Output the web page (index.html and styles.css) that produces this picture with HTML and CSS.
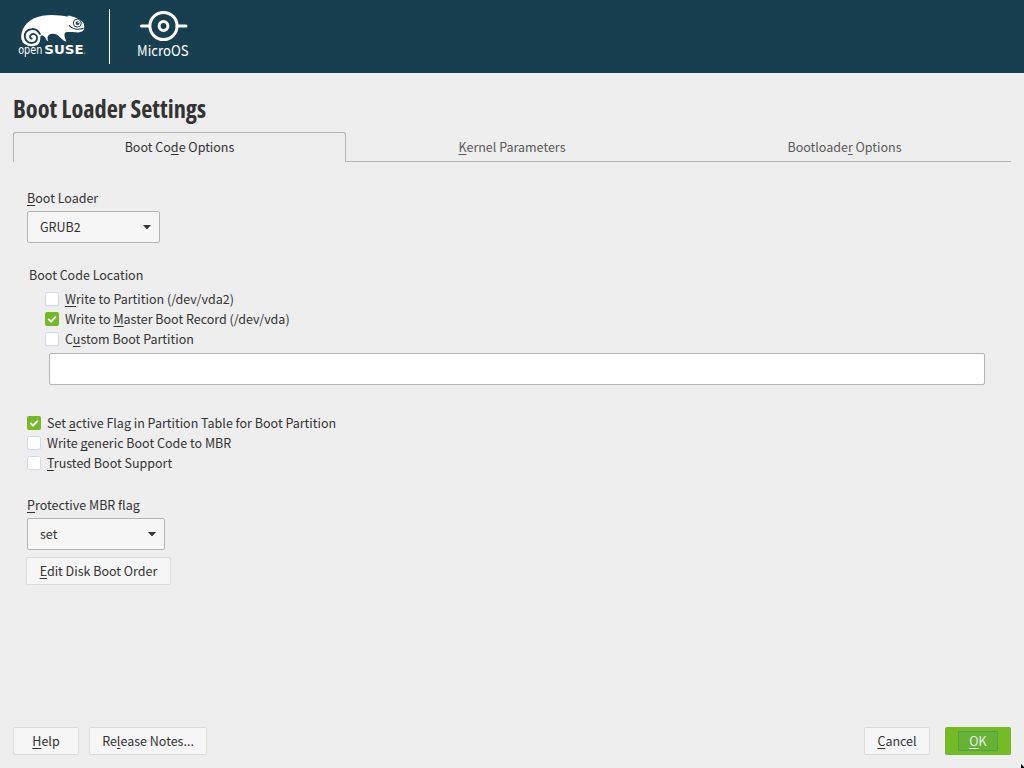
FILE: index.html
```html
<!DOCTYPE html>
<html lang="en">
<head>
<meta charset="utf-8">
<title>Boot Loader Settings</title>
<link rel="stylesheet" href="styles.css">
</head>
<body>
<header class="banner">
  <svg class="brand" width="110" height="73" viewBox="0 0 330 219">
    <path fill="#fff" d="M64 110C65 80 89 54 128 47C158 42 184 46 205 50C202 47 207 45 216 48C229 52 243 58 252 66C255 73 256 82 254 89C250 96 240 98 229 97C216 96 207 95 199 97C193 101 195 111 201 125C191 123 184 113 173 104C163 100 154 101 148 105C143 110 143 117 146 123C139 122 138 109 130 107C125 106 123 108 122 112C123 130 113 139 99 139C78 139 64 128 64 110Z"/>
    <path fill="none" stroke="#173f4f" stroke-width="5.500" d="M122 104C116 92 106 86 96 87C81 88 74 99 75 110C76 123 87 130 98 129C109 128 114 119 112 111C110 103 101 99 94 104C88 109 91 117 98 116"/>
    <circle cx="234" cy="69" r="12" fill="#fff" stroke="#173f4f" stroke-width="3"/>
    <circle cx="235" cy="69" r="6" fill="#173f4f"/><circle cx="237" cy="67" r="2.500" fill="#fff"/>
    <path fill="none" stroke="#173f4f" stroke-width="3.500" d="M209 76C218 87 236 90 253 85"/>
    <text class="open" x="55" y="164" textLength="73" lengthAdjust="spacingAndGlyphs">open</text>
    <text class="suse" x="134" y="164" textLength="119" lengthAdjust="spacingAndGlyphs">SUSE</text>
    <circle cx="257" cy="160" r="2" fill="#aabbc2"/>
  </svg>
  <span class="divider"></span>
  <svg class="product" width="60" height="60" viewBox="0 0 60 60">
    <g fill="none" stroke="#fff"><circle cx="30.5" cy="26" r="13.6" stroke-width="3"/><circle cx="30.5" cy="26" r="4.4" stroke-width="3"/><path stroke-width="3" stroke-linecap="round" d="M8.500 26h8M44 26h9"/></g>
    <text class="micro" x="4" y="55.500" textLength="51.500" lengthAdjust="spacingAndGlyphs">MicroOS</text>
  </svg>
</header>
<main>
  <h1>Boot Loader Settings</h1>
  <nav class="tabs">
    <div class="tab active">Boot Co<u>d</u>e Options</div>
    <div class="tab"><u>K</u>ernel Parameters</div>
    <div class="tab">Bootloade<u>r</u> Options</div>
  </nav>
  <section class="panel">
    <label class="caption"><u>B</u>oot Loader</label>
    <div class="select loader">GRUB2<svg width="10" height="6" viewBox="0 0 10 6"><path fill="#333" d="M1 1h8L5.4 5h-.8z"/></svg></div>
    <div class="group-title">Boot Code Location</div>
    <div class="checks location">
      <label class="check"><i class="box"></i><span><u>W</u>rite to Partition (/dev/vda2)</span></label>
      <label class="check"><i class="box on"><svg width="14" height="14" viewBox="0 0 14 14"><path d="M3.2 6.9L6 9.6L10.8 4.6"/></svg></i><span>Write to <u>M</u>aster Boot Record (/dev/vda)</span></label>
      <label class="check"><i class="box"></i><span>C<u>u</u>stom Boot Partition</span></label>
    </div>
    <div class="field"></div>
    <div class="checks">
      <label class="check"><i class="box on"><svg width="14" height="14" viewBox="0 0 14 14"><path d="M3.2 6.9L6 9.6L10.8 4.6"/></svg></i><span>Set <u>a</u>ctive Flag in Partition Table for Boot Partition</span></label>
      <label class="check"><i class="box"></i><span>Write <u>g</u>eneric Boot Code to MBR</span></label>
      <label class="check"><i class="box"></i><span><u>T</u>rusted Boot Support</span></label>
    </div>
    <label class="caption flag"><u>P</u>rotective MBR flag</label>
    <div class="select mbr">set<svg width="10" height="6" viewBox="0 0 10 6"><path fill="#333" d="M1 1h8L5.4 5h-.8z"/></svg></div>
    <div class="button order"><span><u>E</u>dit Disk Boot Order</span></div>
  </section>
</main>
<footer>
  <div class="button short"><span><u>H</u>elp</span></div>
  <div class="button notes"><span>Re<u>l</u>ease Notes...</span></div>
  <div class="button short cancel"><span><u>C</u>ancel</span></div>
  <div class="button short primary"><span class="focus"><u>O</u>K</span></div>
</footer>
<svg class="pointer" width="4" height="4" viewBox="0 0 4 4"><path d="M1 0l3 3v1H1z"/></svg>
</body>
</html>
```
FILE: styles.css
```css
* { box-sizing: border-box; }
body {
  margin: 0;
  height: 768px;
  overflow: hidden;
  display: flex;
  flex-direction: column;
  background: #eee;
  color: #333;
  font: 12.5px/20px "Noto Sans CJK SC", sans-serif;
}
u { text-decoration: underline 1px; text-underline-offset: 2px; text-decoration-skip-ink: none; }
.banner { display: flex; height: 73px; background: #173f4f; flex: none; }
.brand { flex: none; width: 109px; }
.divider { width: 1px; height: 55px; margin-top: 9px; background: #fff; }
.product { margin-left: 23px; }
.open, .suse { fill: #fff; font-family: "DejaVu Sans", sans-serif; }
.open { font-size: 35px; }
.suse { font-size: 39px; font-weight: bold; }
.micro { fill: #fff; font-family: "Noto Sans CJK SC", sans-serif; font-size: 14.5px; }
main { flex: 1; padding: 18px 13px 0; }
h1 {
  margin: 0;
  height: 41px;
  font: bold 24.3px/36px "Open Sans", sans-serif;
  font-stretch: 75%;
  white-space: nowrap;
}
.tabs { display: grid; grid-template-columns: 333px 332px 333px; height: 30px; }
.tab { border-bottom: 1px solid #b4b4b4; text-align: center; line-height: 20px; padding-top: 5px; color: #5a5a5a; }
.tab.active { border: 1px solid #b4b4b4; border-bottom: 0; border-radius: 3px 3px 0 0; color: #333; padding-top: 4px; }
.panel { padding: 26px 14px 0; }
.caption { display: block; height: 23px; }
.select {
  display: flex;
  align-items: center;
  justify-content: space-between;
  height: 32px;
  padding: 0 7px 0 12px;
  border: 1px solid #b4b4b4;
  border-radius: 2px;
  background: #f6f6f6;
}
.loader { width: 133px; }
.mbr { width: 138px; }
.group-title { margin: 22px 0 4px 2px; }
.check { display: flex; align-items: center; gap: 6px; height: 20px; }
.box { width: 14px; height: 14px; border: 1px solid #d2d9e6; border-radius: 2.5px; background: #fff; }
.box.on { border: 0; border-radius: 2px; background: #73ba25; }
.box svg { display: block; fill: none; stroke: #fff; stroke-width: 2; }
.location { padding-left: 18px; }
.field { height: 32px; margin: 4px 12px 28px 22px; border: 1px solid #b4b4b4; border-radius: 2px; background: #fff; }
.flag { margin-top: 22px; }
.button {
  display: flex;
  align-items: center;
  justify-content: center;
  height: 28px;
  border: 1px solid #dcdcdc;
  border-radius: 2px;
  background: #f6f6f6;
}
.order { width: 145px; margin: 7px 0 0 -1px; }
footer { display: flex; padding: 0 13px 13px; }
.short { width: 66px; }
.notes { width: 118px; margin-left: 10px; }
.cancel { margin-left: auto; margin-right: 15px; }
.primary { border: 0; background: #73ba25; color: #e8eef0; }
.focus { width: 40px; height: 20px; text-align: center; line-height: 18px; border: 1px solid #519f50; border-radius: 1px; background: #66b234; }
.pointer { position: absolute; right: 0; bottom: 0; }
```
